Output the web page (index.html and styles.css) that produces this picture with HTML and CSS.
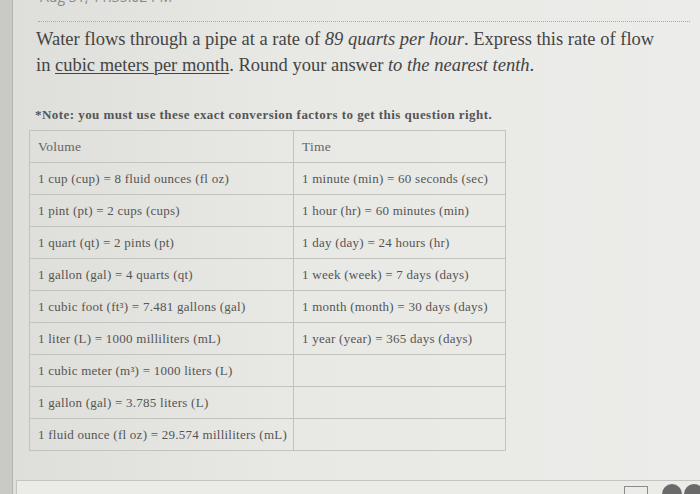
FILE: index.html
```html
<!DOCTYPE html>
<html>
<head>
<meta charset="utf-8">
<link rel="stylesheet" href="styles.css">
</head>
<body>
<div class="page">
  <div class="strip"></div>
  <div class="main">
    <div class="stamp"><span>Aug 31, 11:35:02 PM</span></div>
    <div class="rule"></div>
    <p class="question"><span class="line">Water flows through a pipe at a rate of <em>89 quarts per hour</em>. Express this rate of flow</span><span class="line">in <u>cubic meters per month</u>. Round your answer <em>to the nearest tenth</em>.</span></p>
    <p class="note">*Note: you must use these exact conversion factors to get this question right.</p>
    <table class="conv">
      <tr><td class="head">Volume</td><td class="head">Time</td></tr>
      <tr><td>1 cup (cup) = 8 fluid ounces (fl oz)</td><td>1 minute (min) = 60 seconds (sec)</td></tr>
      <tr><td>1 pint (pt) = 2 cups (cups)</td><td>1 hour (hr) = 60 minutes (min)</td></tr>
      <tr><td>1 quart (qt) = 2 pints (pt)</td><td>1 day (day) = 24 hours (hr)</td></tr>
      <tr><td>1 gallon (gal) = 4 quarts (qt)</td><td>1 week (week) = 7 days (days)</td></tr>
      <tr><td>1 cubic foot (ft³) = 7.481 gallons (gal)</td><td>1 month (month) = 30 days (days)</td></tr>
      <tr><td>1 liter (L) = 1000 milliliters (mL)</td><td>1 year (year) = 365 days (days)</td></tr>
      <tr><td>1 cubic meter (m³) = 1000 liters (L)</td><td></td></tr>
      <tr><td>1 gallon (gal) = 3.785 liters (L)</td><td></td></tr>
      <tr><td>1 fluid ounce (fl oz) = 29.574 milliliters (mL)</td><td></td></tr>
    </table>
    <div class="footer">
      <span class="kbd"></span>
      <span class="dots"><span class="dot"></span><span class="dot"></span></span>
    </div>
  </div>
</div>
</body>
</html>
```

FILE: styles.css
```css
html, body {
  margin: 0;
  padding: 0;
}
body {
  width: 700px;
  height: 494px;
  overflow: hidden;
  background: #e6e6e2;
  font-family: "Liberation Serif", "DejaVu Serif", serif;
  color: #4a4a4a;
}
.page {
  display: flex;
  height: 494px;
}
.strip {
  width: 12px;
  flex: none;
  background: #c9c9c5;
  border-right: 1px solid #b3b3af;
}
.main {
  flex: 1;
  display: flex;
  flex-direction: column;
  background: linear-gradient(90deg, #dededa 0%, #e8e8e4 40%, #ececea 100%);
}
.stamp {
  height: 7px;
  overflow: hidden;
  display: flex;
  align-items: flex-end;
  padding-left: 27px;
  font-family: "Open Sans", sans-serif;
  font-size: 14px;
  line-height: 14px;
  color: #8a8a8a;
}
.stamp span {
  display: block;
  transform: translateY(-2px);
}
.rule {
  margin: 15px 10px 0 25px;
  border-top: 1px dotted #aaaaa6;
}
.question {
  margin: 4px 0 0 23px;
  display: flex;
  flex-direction: column;
  font-size: 18.5px;
  line-height: 26px;
  color: #444;
}
.question .line {
  display: block;
  white-space: nowrap;
}
.question em {
  font-style: italic;
}
.question u {
  text-decoration-thickness: 1px;
  text-underline-offset: 2px;
}
.note {
  margin: 29px 0 0 22px;
  font-size: 13px;
  line-height: 16px;
  letter-spacing: 0.45px;
  font-weight: bold;
  color: #555;
}
.conv {
  margin: 7px 0 0 16px;
  border-collapse: collapse;
  width: 477px;
  table-layout: fixed;
}
.conv td {
  height: 31px;
  padding: 0 0 0 8px;
  border: 1px solid #c2c2be;
  font-size: 13px;
  letter-spacing: 0.25px;
  color: #555;
  vertical-align: middle;
  white-space: nowrap;
}
.conv td:first-child {
  width: 255px;
}
.conv td.head {
  color: #666;
  font-size: 13.5px;
}
.footer {
  margin: 29px 0 0 3px;
  height: 14px;
  border-top: 1px solid #c4c4c0;
  border-left: 1px solid #c4c4c0;
  background: #ebebe8;
  display: flex;
  justify-content: flex-end;
  align-items: flex-end;
  gap: 14px;
}
.kbd {
  width: 22px;
  height: 7px;
  border: 1px solid #8c8c8c;
  border-bottom: none;
}
.dots {
  display: flex;
  gap: 2px;
  margin-right: -4px;
}
.dot {
  width: 20px;
  height: 10px;
  border-radius: 10px 10px 0 0;
  background: #6a6a6a;
}
```
